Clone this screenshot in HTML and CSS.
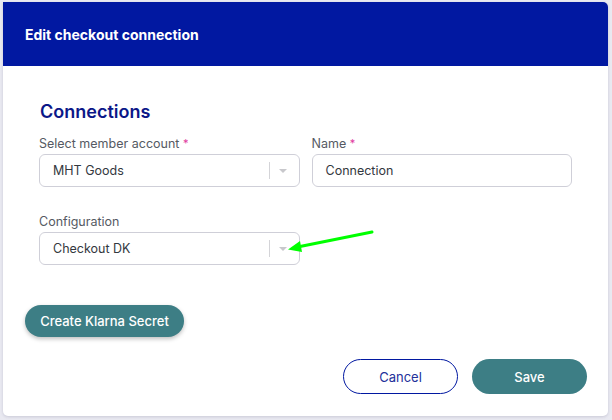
FILE: index.html
```html
<!DOCTYPE html>
<html>
<head>
<meta charset="utf-8">
<link rel="stylesheet" href="styles.css">
</head>
<body>
<div class="modal">
  <div class="modal-header">Edit checkout connection</div>
  <div class="modal-body">
    <h2 class="section-title">Connections</h2>
    <div class="row">
      <div class="field">
        <label class="label">Select member account <span class="req">*</span></label>
        <div class="select">
          <span class="value">MHT Goods</span>
          <span class="sep"></span>
          <span class="caret"></span>
        </div>
      </div>
      <div class="field">
        <label class="label">Name <span class="req">*</span></label>
        <div class="input"><span class="value">Connection</span></div>
      </div>
    </div>
    <div class="row row-config">
      <div class="field">
        <label class="label">Configuration</label>
        <div class="select">
          <span class="value">Checkout DK</span>
          <span class="sep"></span>
          <span class="caret"></span>
        </div>
      </div>
      <div class="field"></div>
    </div>
  </div>
  <div class="secret-wrap">
    <button class="btn btn-teal btn-secret">Create Klarna Secret</button>
  </div>
  <div class="footer">
    <button class="btn btn-outline">Cancel</button>
    <button class="btn btn-teal btn-save">Save</button>
  </div>
</div>
<svg class="annotation" width="612" height="420" viewBox="0 0 612 420">
  <line x1="372" y1="232" x2="300" y2="246.5" stroke="#00ff00" stroke-width="3" stroke-linecap="round"/>
  <polygon points="288,249.5 302,252 300,241" fill="#00ff00"/>
</svg>
</body>
</html>
```

FILE: styles.css
```css
* { box-sizing: border-box; }
html, body { margin: 0; padding: 0; }
body {
  width: 612px;
  height: 420px;
  background: #e9e9f1;
  font-family: Inter, "Noto Sans", sans-serif;
  position: relative;
  overflow: hidden;
}
.modal {
  margin: 2px 0 0 3px;
  width: 605px;
  height: 414px;
  background: #ffffff;
  border-radius: 0 5px 5px 5px;
  box-shadow: 0 1px 3px rgba(60, 60, 100, 0.18);
  overflow: hidden;
  display: flex;
  flex-direction: column;
}
.modal-header {
  height: 64px;
  background: #0118a1;
  color: #ffffff;
  font-weight: 700;
  font-size: 14px;
  display: flex;
  align-items: center;
  padding-left: 22px;
  flex-shrink: 0;
}
.modal-body {
  padding: 35px 36px 0 36px;
}
.section-title {
  margin: 0 0 12px 1px;
  font-size: 18px;
  line-height: 22px;
  font-weight: 600;
  color: #0b1788;
}
.row {
  display: flex;
  gap: 12px;
}
.row-config { margin-top: 26px; }
.field {
  width: 261px;
  display: flex;
  flex-direction: column;
  gap: 2px;
}
.label {
  font-size: 12.5px;
  line-height: 17px;
  color: #555a63;
}
.req {
  color: #e0399e;
  font-size: 11px;
  vertical-align: 1px;
}
.select, .input {
  height: 33px;
  border: 1px solid #cfcfd8;
  border-radius: 6px;
  display: flex;
  align-items: center;
  padding-left: 13px;
  font-size: 12.5px;
  color: #333840;
}
.input { width: 260px; }
.value { flex: 1; }
.sep {
  width: 1px;
  height: 17px;
  background: #d4d4d8;
}
.caret {
  width: 0;
  height: 0;
  border-left: 4px solid transparent;
  border-right: 4px solid transparent;
  border-top: 4px solid #c8c8cc;
  margin: 1px 12px 0 9px;
}
.secret-wrap {
  padding: 40px 0 0 22px;
}
.btn {
  font-family: Inter, "Noto Sans", sans-serif;
  border-radius: 18px;
  cursor: pointer;
}
.btn-teal {
  background: #3d7e85;
  color: #ffffff;
  border: none;
}
.btn-secret {
  height: 32px;
  width: 159px;
  font-size: 13px;
  font-weight: 500;
  box-shadow: 0 2px 4px rgba(0, 0, 0, 0.25);
}
.footer {
  display: flex;
  justify-content: flex-end;
  gap: 14px;
  padding: 22px 21px 0 0;
}
.btn-outline {
  width: 115px;
  height: 35px;
  background: #ffffff;
  border: 1px solid #0118a1;
  color: #23309a;
  font-size: 13px;
}
.btn-save {
  width: 115px;
  height: 35px;
  font-size: 13px;
  font-weight: 500;
}
.annotation {
  position: absolute;
  left: 0;
  top: 0;
  pointer-events: none;
}
```
